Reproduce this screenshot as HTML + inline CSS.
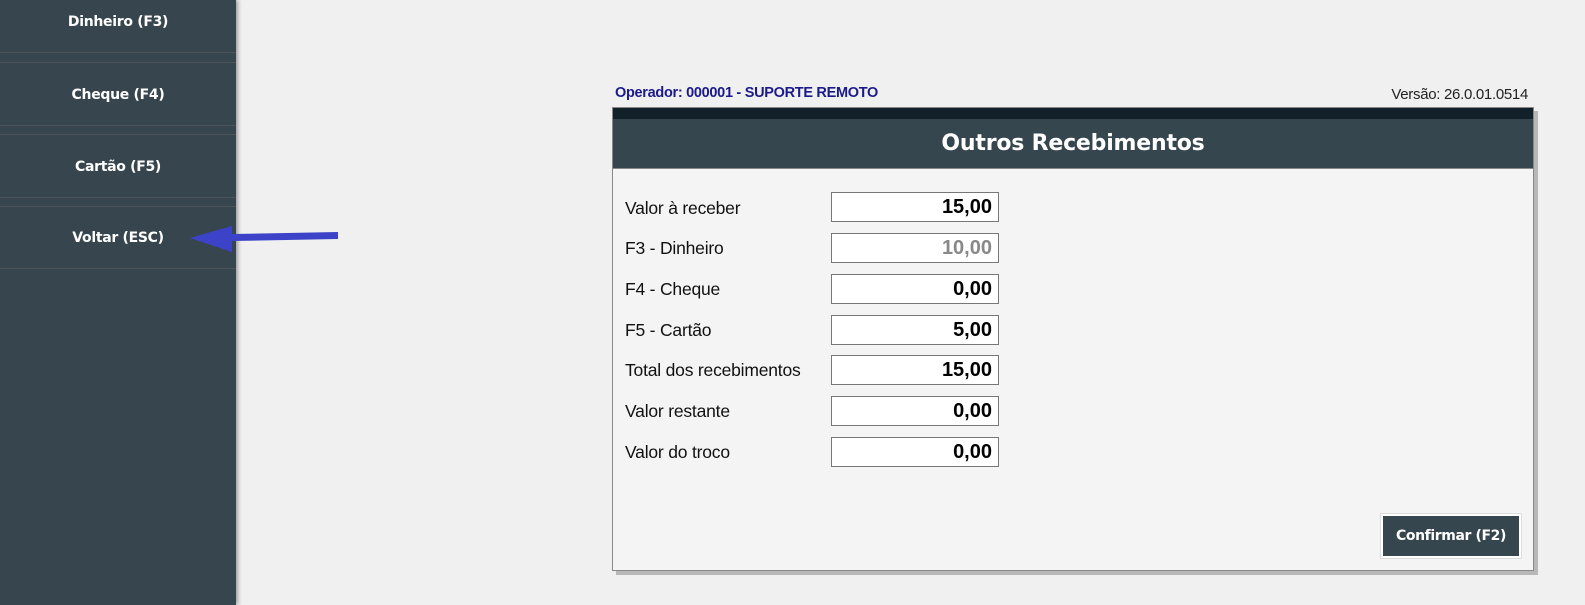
<!DOCTYPE html>
<html><head><meta charset="utf-8"><style>
body{margin:0;width:1585px;height:605px;background:#f0f0f0;position:relative;overflow:hidden;font-family:"Liberation Sans",sans-serif}
.side{position:absolute;left:0;top:0;width:236px;height:605px;background:#37464e;box-shadow:2px 0 4px rgba(0,0,0,.35)}
.btn{position:absolute;left:0;width:236px;border-bottom:1px solid #4d5358;border-top:1px solid #4d5358;color:#fff;font-weight:bold;font-size:14px;text-align:center;box-sizing:border-box;font-family:"DejaVu Sans",sans-serif;letter-spacing:-0.3px}
.op{position:absolute;left:615px;top:85px;font-size:14.5px;font-weight:bold;color:#1a1a8a;letter-spacing:-0.3px}
.ver{position:absolute;right:57px;top:86px;font-size:15px;color:#222;letter-spacing:-0.3px}
.panel{position:absolute;left:612px;top:107px;width:922px;height:464px;background:#f4f4f4;border:1px solid #888;box-sizing:border-box;box-shadow:4px 4px 0 #b8b8b8}
.strip{height:11px;background:#12202a}
.head{height:49px;background:#36464f;border-bottom:1px solid #888;color:#fff;font-weight:bold;font-size:22px;text-align:center;line-height:50px;font-family:"DejaVu Sans",sans-serif;letter-spacing:-0.2px}
.lab{position:absolute;left:12px;font-size:17.5px;color:#111;letter-spacing:-0.2px}
.in{position:absolute;left:218px;width:168px;height:30px;background:#fff;border:1px solid #777;box-sizing:border-box;text-align:right;padding-right:6px;font-weight:bold;font-size:20px;line-height:29px;color:#000}
.conf{position:absolute;left:768px;top:406px;width:140px;height:44px;background:#36464f;border:2px solid #fff;box-sizing:border-box;color:#fff;font-weight:bold;font-size:14px;text-align:center;line-height:40px;font-family:"DejaVu Sans",sans-serif;letter-spacing:-0.4px;outline:1px solid #ddd}
</style></head><body>
<div class="side">
<div class="btn" style="top:-2px;height:55px;line-height:48px;border-top:none">Dinheiro (F3)</div>
<div class="btn" style="top:62px;height:64px;line-height:64px">Cheque (F4)</div>
<div class="btn" style="top:134px;height:64px;line-height:64px">Cartão (F5)</div>
<div class="btn" style="top:206px;height:63px;line-height:63px">Voltar (ESC)</div>
</div>
<svg style="position:absolute;left:185px;top:222px" width="160" height="34"><polygon points="5,16 47,4 47,12 153,10 153,17 47,19 47,30" fill="#3c43c9"/></svg>
<div class="op">Operador: 000001 - SUPORTE REMOTO</div>
<div class="ver">Versão: 26.0.01.0514</div>
<div class="panel">
<div class="strip"></div>
<div class="head">Outros Recebimentos</div>
<div class="lab" style="top:90px">Valor à receber</div><div class="in" style="top:84px">15,00</div>
<div class="lab" style="top:130px">F3 - Dinheiro</div><div class="in" style="top:125px;color:#888">10,00</div>
<div class="lab" style="top:171px">F4 - Cheque</div><div class="in" style="top:166px">0,00</div>
<div class="lab" style="top:212px">F5 - Cartão</div><div class="in" style="top:207px">5,00</div>
<div class="lab" style="top:252px">Total dos recebimentos</div><div class="in" style="top:247px">15,00</div>
<div class="lab" style="top:293px">Valor restante</div><div class="in" style="top:288px">0,00</div>
<div class="lab" style="top:334px">Valor do troco</div><div class="in" style="top:329px">0,00</div>
<div class="conf">Confirmar (F2)</div>
</div>
</body></html>
